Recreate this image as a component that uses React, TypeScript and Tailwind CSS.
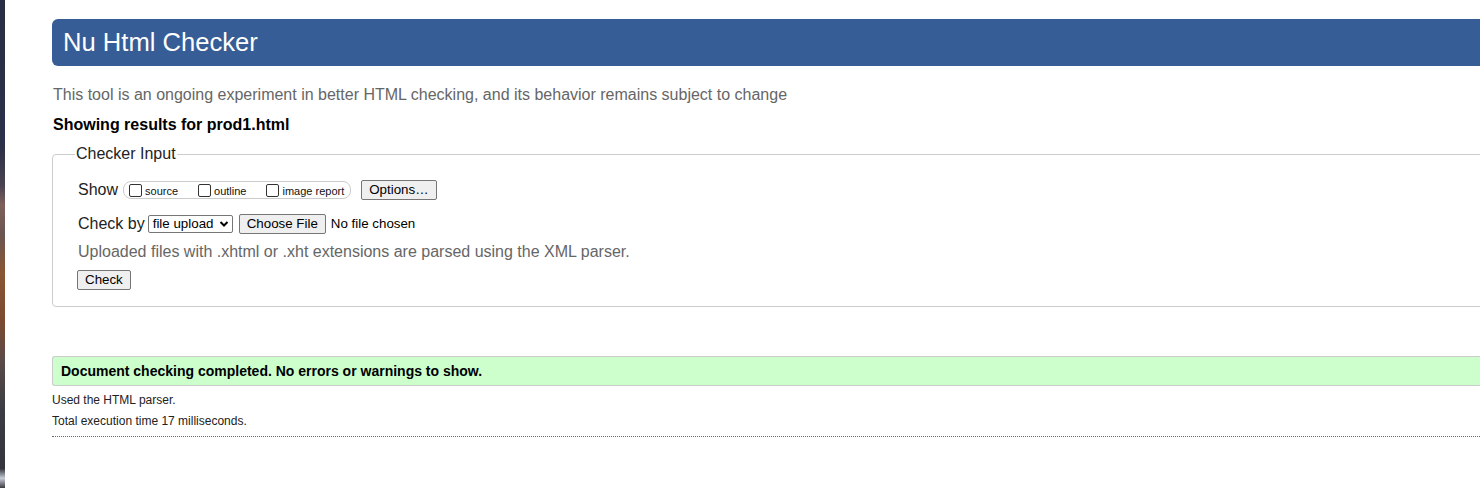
import React from "react";

function Box({ label, last }: { label: string; last?: boolean }) {
  return (
    <span className={"flex items-center " + (last ? "pr-[6px]" : "pr-[16px]")}>
      <span className="ml-[4px] mr-[3px] w-[13px] h-[13px] rounded-[2px] border border-[#333] bg-white" />
      <span className="text-[11px] leading-[13px] text-[#111] mt-[3px]">{label}</span>
    </span>
  );
}

function Btn({ children, className = "" }: { children: React.ReactNode; className?: string }) {
  return (
    <span
      className={
        "inline-flex items-center justify-center h-[20px] px-[7px] bg-[#efefef] border border-[#767676] rounded-[2px] text-[13.33px] text-black " +
        className
      }
    >
      {children}
    </span>
  );
}

export default function App() {
  return (
    <div className="flex w-[1480px] h-[488px] overflow-hidden bg-white font-['Liberation_Sans',Arial,sans-serif] text-[#222]">
      <div className="w-[5px] shrink-0 bg-[linear-gradient(to_bottom,#2a2e45_0%,#2c3048_30%,#4a4250_38%,#7d5f5a_42%,#6a5550_48%,#8a5533_56%,#7a4a30_66%,#5a4a48_74%,#3c3c44_84%,#33343c_96%,#c8ccd8_98%,#3a3a40_100%)]" />
      <main className="shrink-0 w-[1500px] ml-[47px] pt-[19px]">
        <h1 className="h-[47px] bg-[#365d95] rounded-l-[6px] text-white text-[25.6px] pl-[11px] flex items-center">
          Nu Html Checker
        </h1>
        <p className="mt-[20px] text-[16px] leading-[18px] text-[#666] pl-[1px]">
          This tool is an ongoing experiment in better HTML checking, and its behavior remains subject to change
        </p>
        <p className="mt-[12px] text-[16px] leading-[18px] font-bold text-black pl-[1px]">
          Showing results for prod1.html
        </p>
        <fieldset className="mt-[11px] border border-[#ccc] rounded-[4px] pl-[22px] pt-[17px] pb-[16px]">
          <legend className="px-[1px] text-[16px] leading-[18px] text-[#222]">Checker Input</legend>
          <div className="pl-[3px] flex flex-col">
            <div className="flex items-center h-[20px]">
              <span className="text-[16px] leading-[18px] mr-[5px]">Show</span>
              <span className="flex items-center h-[18px] border border-[#ccc] rounded-[8px] pl-[1px]">
                <Box label="source" />
                <Box label="outline" />
                <Box label="image report" last />
              </span>
              <Btn className="ml-[10px]">Options…</Btn>
            </div>
            <div className="flex items-center h-[20px] mt-[14px]">
              <span className="text-[16px] leading-[18px] mr-[3px]">Check by</span>
              <span className="flex items-center h-[18px] w-[85px] border border-[#767676] rounded-[2px] bg-white pl-[4px] text-[13.33px] text-black">
                file upload
                <svg className="ml-[6px]" width="10" height="8" viewBox="0 0 10 8">
                  <path d="M1.5 2 L5 5.5 L8.5 2" fill="none" stroke="#000" strokeWidth="2" />
                </svg>
              </span>
              <Btn className="ml-[6px]">Choose File</Btn>
              <span className="ml-[5px] text-[13.33px] text-black">No file chosen</span>
            </div>
            <p className="mt-[9px] text-[16px] leading-[18px] text-[#666]">
              Uploaded files with .xhtml or .xht extensions are parsed using the XML parser.
            </p>
            <div className="mt-[9px] flex">
              <Btn className="-ml-[1px]">Check</Btn>
            </div>
          </div>
        </fieldset>
        <div className="mt-[49px] h-[30px] flex items-center bg-[#ccffcc] border-y border-l border-[#ccc] rounded-l-[3px] pl-[8px]">
          <span className="text-[14px] font-bold text-black">
            Document checking completed. No errors or warnings to show.
          </span>
        </div>
        <p className="mt-[7px] text-[12px] leading-[14px] text-[#222]">Used the HTML parser.</p>
        <p className="mt-[7px] text-[12px] leading-[14px] text-[#222]">Total execution time 17 milliseconds.</p>
        <div className="mt-[8px] border-b border-dotted border-[#666]" />
      </main>
    </div>
  );
}
